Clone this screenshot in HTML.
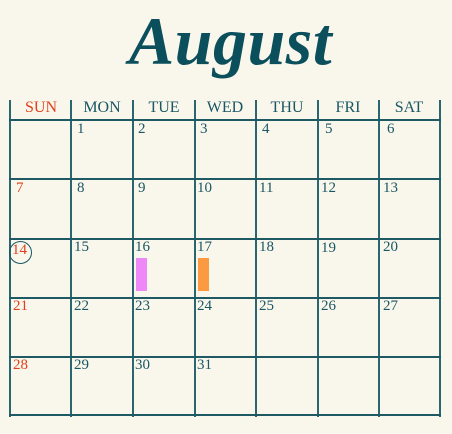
<!DOCTYPE html>
<html><head><style>
body{margin:0;width:452px;height:434px;background:#f9f7ec;position:relative;overflow:hidden;font-family:"Liberation Serif",serif;color:#1a5663}
.t{position:absolute;left:0;width:452px;top:2px;text-align:center;font-size:68px;font-weight:bold;font-style:italic;color:#0b4f5c;letter-spacing:0.5px;padding-left:9px;box-sizing:border-box}
.v{position:absolute;width:2px;background:#2a6670}
.h{position:absolute;height:2px;background:#1e5a64;left:9px;width:432px}
.hd{position:absolute;top:99px;font-size:16px;text-align:center;width:60px}
.n{position:absolute;font-size:15px}
.r{color:#e0401a}
</style></head><body>
<div class="t">August</div>
<div class="v" style="left:9px;top:100px;height:317px"></div>
<div class="v" style="left:70px;top:100px;height:317px"></div>
<div class="v" style="left:132px;top:100px;height:317px"></div>
<div class="v" style="left:194px;top:100px;height:317px"></div>
<div class="v" style="left:255px;top:100px;height:317px"></div>
<div class="v" style="left:317px;top:100px;height:317px"></div>
<div class="v" style="left:378px;top:100px;height:317px"></div>
<div class="v" style="left:439px;top:100px;height:317px"></div>
<div class="h" style="top:119px"></div>
<div class="h" style="top:178px"></div>
<div class="h" style="top:238px"></div>
<div class="h" style="top:297px"></div>
<div class="h" style="top:356px"></div>
<div class="h" style="top:414px"></div>
<div class="hd r" style="left:11px">SUN</div>
<div class="hd" style="left:72px">MON</div>
<div class="hd" style="left:134px">TUE</div>
<div class="hd" style="left:195px">WED</div>
<div class="hd" style="left:257px">THU</div>
<div class="hd" style="left:318px">FRI</div>
<div class="hd" style="left:379px">SAT</div>
<div class="n" style="left:77px;top:121px">1</div>
<div class="n" style="left:138px;top:121px">2</div>
<div class="n" style="left:200px;top:121px">3</div>
<div class="n" style="left:262px;top:121px">4</div>
<div class="n" style="left:325px;top:121px">5</div>
<div class="n" style="left:387px;top:121px">6</div>
<div class="n r" style="left:16px;top:180px">7</div>
<div class="n" style="left:77px;top:180px">8</div>
<div class="n" style="left:138px;top:180px">9</div>
<div class="n" style="left:197px;top:180px">10</div>
<div class="n" style="left:259px;top:180px">11</div>
<div class="n" style="left:321px;top:180px">12</div>
<div class="n" style="left:383px;top:180px">13</div>
<div style="position:absolute;left:9px;top:241px;width:21px;height:21px;border:1.5px solid #1a5663;border-radius:50%"></div>
<div class="n r" style="left:12px;top:242px">14</div>
<div class="n" style="left:74px;top:239px">15</div>
<div class="n" style="left:135px;top:239px">16</div>
<div class="n" style="left:197px;top:239px">17</div>
<div class="n" style="left:259px;top:239px">18</div>
<div class="n" style="left:321px;top:240px">19</div>
<div class="n" style="left:383px;top:239px">20</div>
<div style="position:absolute;left:136px;top:258px;width:11px;height:33px;background:#ee88f7"></div>
<div style="position:absolute;left:198px;top:258px;width:11px;height:33px;background:#fb9a40"></div>
<div class="n r" style="left:13px;top:298px">21</div>
<div class="n" style="left:74px;top:298px">22</div>
<div class="n" style="left:135px;top:298px">23</div>
<div class="n" style="left:197px;top:298px">24</div>
<div class="n" style="left:259px;top:298px">25</div>
<div class="n" style="left:321px;top:298px">26</div>
<div class="n" style="left:383px;top:298px">27</div>
<div class="n r" style="left:13px;top:357px">28</div>
<div class="n" style="left:74px;top:357px">29</div>
<div class="n" style="left:135px;top:357px">30</div>
<div class="n" style="left:197px;top:357px">31</div>
</body></html>
